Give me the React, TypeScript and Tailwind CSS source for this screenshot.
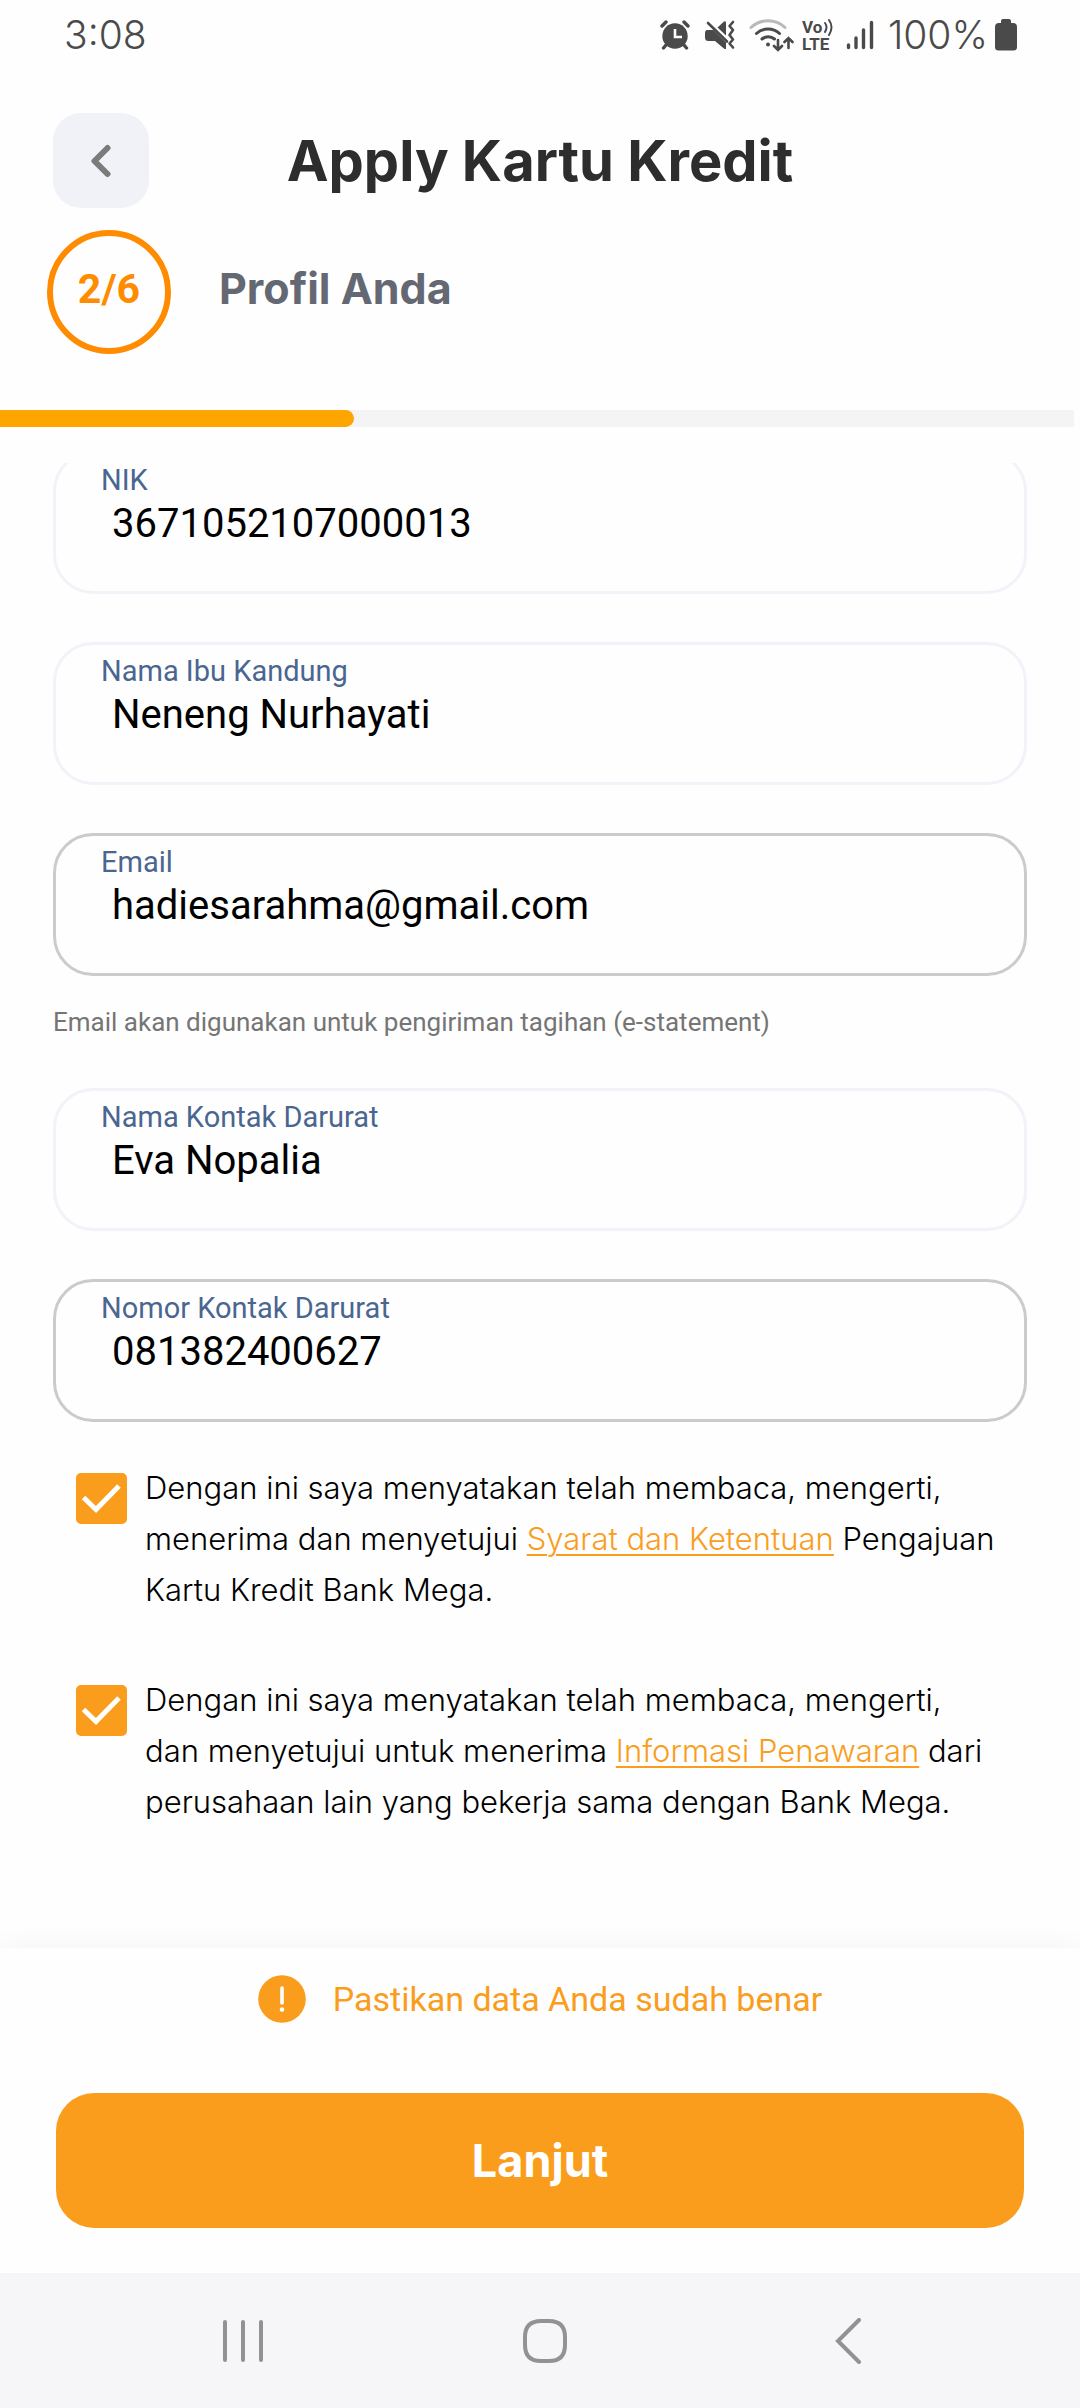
import { useState } from "react";
import type { ReactNode } from "react";

function StatusBar() {
  return (
    <div className="flex h-[70px] items-center justify-between pr-[63px] pl-16 text-[#4a4a4a]">
      <span className="font-['Inter'] text-[39px] leading-[48px] font-light">3:08</span>
      <div className="flex items-center">
        <svg width="30" height="30" viewBox="0 0 30 30" fill="none" stroke="currentColor" className="mr-[15px]" aria-label="Alarm">
          <circle cx="15" cy="16" r="12.7" fill="currentColor" stroke="none" />
          <path d="M2 6 6 2M28 6l-4-4" strokeWidth="3.4" strokeLinecap="round" />
          <path d="m6 25-2.5 3M24 25l2.500 3" strokeWidth="3.4" strokeLinecap="round" />
          <path d="M15 9v8h7" stroke="#fff" strokeWidth="2.600" />
        </svg>
        <svg width="30" height="30" viewBox="0 0 30 30" className="mr-[14px]" aria-label="Getar">
          <path d="M2 10h6.500L21 22.500V29h-1.500L10 21H3.500Q0 21 0 17.500v-4Q0 10 2 10ZM12.500 7.500 19 1.500h2v14Z" fill="currentColor" />
          <path d="m3 3 19 18.500" stroke="currentColor" strokeWidth="2.600" strokeLinecap="round" />
          <path d="m28 2-3.500 4 3.500 4-3.500 5 3.500 4.500-3.500 4 3.500 4" fill="none" stroke="currentColor" strokeWidth="2.600" strokeLinecap="round" strokeLinejoin="round" />
        </svg>
        <svg width="45" height="34" viewBox="0 0 45 34" fill="none" stroke="currentColor" strokeWidth="3" strokeLinecap="round" className="mr-2" aria-label="Wi-Fi">
          <path d="M2 9.500a25 25 0 0 1 34 0" stroke="#b9b9b9" />
          <path d="M7.500 15.500a17 17 0 0 1 23 0" />
          <path d="M13 21a9.500 9.500 0 0 1 12.500 0" />
          <circle cx="19" cy="26.500" r="2" fill="currentColor" stroke="none" />
          <path d="M29 22v10m-4-4 4 4 4-4M39.500 30V20m-4 4 4-4 4 4" strokeWidth="2.600" />
        </svg>
        <svg width="32" height="42" viewBox="0 0 32 42" className="mr-3 font-['Roboto'] text-[17px] font-bold" aria-label="VoLTE">
          <text x="0" y="19" fill="currentColor">Vo</text>
          <path d="M23 9q3 4 0 9M27 6q5 7 0 15" fill="none" stroke="currentColor" strokeWidth="2" strokeLinecap="round" />
          <text x="0" y="36" fill="currentColor">LTE</text>
        </svg>
        <svg width="28" height="30" viewBox="0 0 28 30" stroke="currentColor" strokeWidth="3.400" strokeLinecap="round" className="mr-[14px]" aria-label="Sinyal">
          <path d="M2.500 25v2.500M10 18v9.500M17.500 10v17.500M25.500 2.500v25" />
        </svg>
        <span className="font-['Inter'] text-[39px] leading-[48px] font-light">100%</span>
        <svg width="22" height="32" viewBox="0 0 22 32" fill="currentColor" className="ml-[7px]" aria-label="Baterai">
          <path d="M6 2q0-2 2-2h6q2 0 2 2v2h2q4 0 4 4v20q0 3.500-3.500 3.500h-15Q0 31.500 0 28V8q0-4 4-4h2Z" />
        </svg>
      </div>
    </div>
  );
}

function Field({
  id,
  label,
  value,
  editable = false,
}: {
  id: string;
  label: string;
  value: string;
  editable?: boolean;
}) {
  const [text, setText] = useState(value);
  const border = editable ? "border-[#cbcbcb]" : "border-[#f2f2f9]";
  return (
    <div className={`rounded-[40px] border-[3px] ${border} px-[45px] pt-[6px] pb-[43px] font-['Roboto']`}>
      <label htmlFor={id} className="block text-[29px] leading-10 text-[#4a6690]">
        {label}
      </label>
      <input
        id={id}
        value={text}
        readOnly={!editable}
        onChange={(e) => setText(e.target.value)}
        className="block h-12 w-full bg-transparent pl-[11px] text-[40px] leading-[48px] text-black outline-none"
      />
    </div>
  );
}

function Consent({ id, children }: { id: string; children: ReactNode }) {
  return (
    <div className="flex items-start gap-[18px]">
      <div className="mt-[11px] grid size-[51px] shrink-0">
        <input
          id={id}
          type="checkbox"
          defaultChecked
          className="peer col-start-1 row-start-1 size-[51px] appearance-none rounded-[5px] border-4 border-[#fa9d1c] checked:bg-[#fa9d1c]"
        />
        <svg viewBox="0 0 51 51" fill="none" className="pointer-events-none invisible col-start-1 row-start-1 size-[51px] peer-checked:visible">
          <path d="m7.500 24.500 12.500 12L43 13" stroke="#fff" strokeWidth="5" />
        </svg>
      </div>
      <label htmlFor={id} className="font-['Inter'] text-[31px] leading-[51px] font-light whitespace-nowrap text-black">
        {children}
      </label>
    </div>
  );
}

export default function App() {
  const link = "text-[#fa9d1c] underline decoration-2 underline-offset-4";
  return (
    <div className="flex min-h-screen flex-col bg-[#fefefe] font-['Inter']">
      <StatusBar />

      <header className="grid grid-cols-[96px_1fr_96px] items-center px-[53px] pt-[43px]">
        <button type="button" aria-label="Kembali" className="flex h-[95px] w-24 items-center justify-center rounded-[28px] bg-[#f1f2f8]">
          <svg width="22" height="34" viewBox="0 0 22 34" fill="none" stroke="#7b7b7a" strokeWidth="6" strokeLinecap="round" strokeLinejoin="round">
            <path d="M17.500 4 4.500 17l13 13" />
          </svg>
        </button>
        <h1 className="text-center text-[56px] leading-[64px] font-bold text-[#2d2d2d]">Apply Kartu Kredit</h1>
      </header>

      <div className="mt-[22px] flex items-start gap-12 pl-[47px]">
        <div className="flex size-[124px] justify-center rounded-full border-[6px] border-[#ff8c00] pt-7 font-['Roboto'] text-[41px] leading-[50px] font-bold text-[#ff8c00]">
          2/6
        </div>
        <h2 className="pt-8 text-[43px] leading-[52px] font-bold text-[#646873]">Profil Anda</h2>
      </div>

      <div role="progressbar" aria-label="Langkah" aria-valuenow={2} aria-valuemax={6} className="mt-14 mr-[6px] h-[17px] bg-[#f4f4f4]">
        <div className="h-full w-[33%] rounded-r-full bg-[#ffa500]" />
      </div>

      <main className="mt-9 flex-1 overflow-hidden px-[53px]">
        <form className="-mt-3 flex flex-col gap-12">
          <Field id="nik" label="NIK" value="3671052107000013" />
          <Field id="ibu" label="Nama Ibu Kandung" value="Neneng Nurhayati" />
          <Field id="email" label="Email" value="hadiesarahma@gmail.com" editable />
          <p className="-mt-[18px] mb-[2px] font-['Roboto'] text-[26px] leading-8 text-[#757575]">
            Email akan digunakan untuk pengiriman tagihan (e-statement)
          </p>
          <Field id="kontak" label="Nama Kontak Darurat" value="Eva Nopalia" />
          <Field id="nomor" label="Nomor Kontak Darurat" value="081382400627" editable />
        </form>
        <div className="mt-10 flex flex-col gap-[59px] pl-[23px]">
          <Consent id="syarat">
            Dengan ini saya menyatakan telah membaca, mengerti,
            <br />
            menerima dan menyetujui{" "}
            <a href="#syarat" className={link}>Syarat dan Ketentuan</a> Pengajuan
            <br />
            Kartu Kredit Bank Mega.
          </Consent>
          <Consent id="penawaran">
            Dengan ini saya menyatakan telah membaca, mengerti,
            <br />
            dan menyetujui untuk menerima{" "}
            <a href="#penawaran" className={link}>Informasi Penawaran</a> dari
            <br />
            perusahaan lain yang bekerja sama dengan Bank Mega.
          </Consent>
        </div>
      </main>

      <footer className="bg-[#fefefe] px-14 pt-[27px] pb-[45px] shadow-[0_-4px_24px_rgba(0,0,0,0.04)]">
        <div className="flex items-center justify-center gap-[27px] text-[#fa9d1c]">
          <svg width="48" height="48" viewBox="0 0 48 48" aria-hidden="true">
            <circle cx="24" cy="24" r="23.800" fill="currentColor" />
            <path d="M24 13v15" stroke="#fff" strokeWidth="3.600" strokeLinecap="round" />
            <circle cx="24" cy="34.500" r="2.300" fill="#fff" />
          </svg>
          <p className="font-['Roboto'] text-[34px] leading-[48px]">Pastikan data Anda sudah benar</p>
        </div>
        <button type="button" className="mt-[70px] block h-[135px] w-full rounded-[38px] bg-[#fa9d1c] text-[45px] leading-[52px] font-bold text-white">
          Lanjut
        </button>
      </footer>

      <nav className="flex h-[135px] items-center justify-between bg-[#f6f6f8] pr-[219px] pl-[223px] text-[#929292]">
        <button type="button" aria-label="Aplikasi terbaru">
          <svg width="40" height="44" viewBox="0 0 40 44" fill="none" stroke="currentColor" strokeWidth="4" strokeLinecap="round">
            <path d="M2 3v38M20 3v38M38 3v38" />
          </svg>
        </button>
        <button type="button" aria-label="Beranda" className="pr-2">
          <svg width="44" height="44" viewBox="0 0 44 44" fill="none" stroke="currentColor" strokeWidth="4">
            <path d="M22 2h4Q42 2 42 18v8q0 16-16 16h-8Q2 42 2 26v-8Q2 2 18 2Z" />
          </svg>
        </button>
        <button type="button" aria-label="Kembali ke layar sebelumnya">
          <svg width="26" height="46" viewBox="0 0 26 46" fill="none" stroke="currentColor" strokeWidth="4" strokeLinecap="round">
            <path d="M24 2 3 23l21 21" />
          </svg>
        </button>
      </nav>
    </div>
  );
}
